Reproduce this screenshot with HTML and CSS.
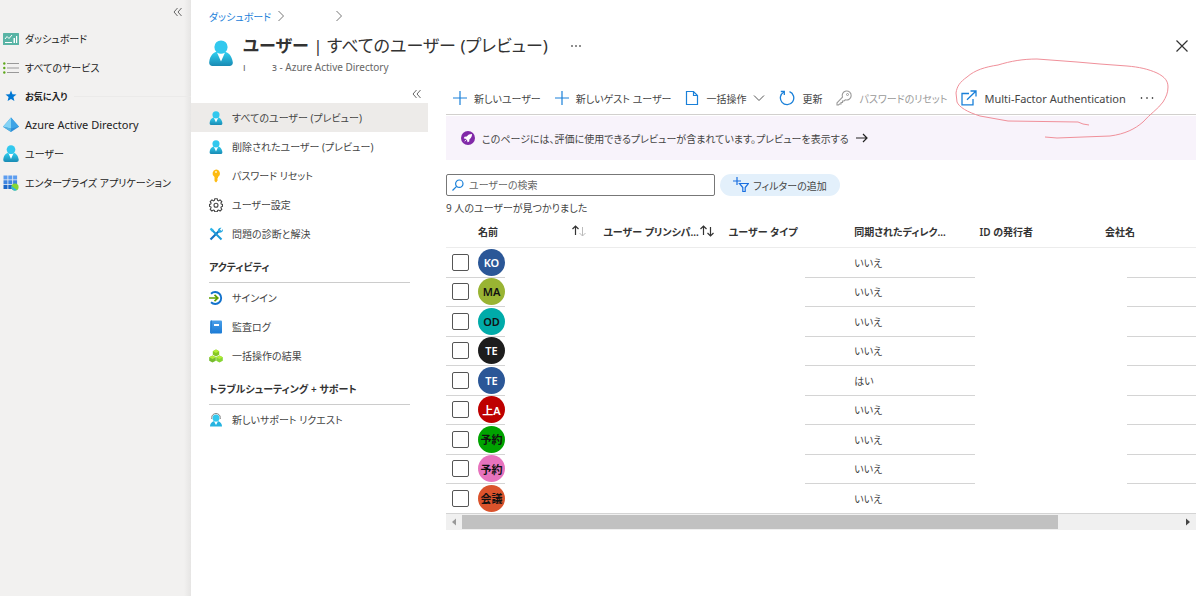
FILE: index.html
```html
<!DOCTYPE html>
<html lang="ja">
<head>
    <meta charset="UTF-8">
    <meta name="viewport" content="width=device-width, initial-scale=1.0">
    <title>ユーザー | すべてのユーザー (プレビュー)</title>
    <link rel="stylesheet" href="styles.css">
</head>
<body>
    <!-- Shared icons -->
    <svg class="defs" aria-hidden="true">
        <defs>
            <linearGradient id="personFill" x1="0" y1="0" x2="0" y2="1">
                <stop offset="0" stop-color="#32d4f5"/>
                <stop offset="1" stop-color="#198ab3"/>
            </linearGradient>
            <linearGradient id="bookFill" x1="0" y1="0" x2="0" y2="1">
                <stop offset="0" stop-color="#4a9fe8"/>
                <stop offset="1" stop-color="#1a7bd6"/>
            </linearGradient>
        </defs>
        <symbol id="person" viewBox="0 0 24 26">
            <path d="M20.500 26a3.300 3.300 0 0 0 3.300-3.700C23 16 19.500 11 12 11S1 15.400.200 22.300A3.300 3.300 0 0 0 3.500 26z" fill="url(#personFill)"/>
            <path d="M12 13.500c-1.500 0-2.800-.4-4-1.100L12 21.500l4-9.100c-1.200.7-2.500 1.100-4 1.100z" fill="#fff"/>
            <circle cx="12" cy="7" r="6.600" fill="#32c8ee"/>
        </symbol>
        <symbol id="chevron" viewBox="0 0 8 12">
            <path d="M1.500 1l5 5-5 5" fill="none" stroke="#777" stroke-width="1"/>
        </symbol>
        <symbol id="collapse" viewBox="0 0 10 10">
            <path d="M4.500 1L1 5l3.500 4M8.500 1L5 5l3.500 4" fill="none" stroke="#666" stroke-width="1"/>
        </symbol>
        <symbol id="plus" viewBox="0 0 14 14">
            <path d="M7 0v14M0 7h14" stroke="#1a80d9" stroke-width="1.200"/>
        </symbol>
        <symbol id="sort" viewBox="0 0 16 12">
            <path d="M4.500 10V1M1.500 4l3-3 3 3" fill="none" stroke="#333" stroke-width="1.200"/>
            <path d="M11.500 2v9M8.500 8l3 3 3-3" fill="none" stroke="#333" stroke-width="1.200"/>
        </symbol>
        <symbol id="sort-asc" viewBox="0 0 16 12">
            <path d="M4.500 10V1M1.500 4l3-3 3 3" fill="none" stroke="#333" stroke-width="1.200"/>
            <path d="M11.500 2v9M8.500 8l3 3 3-3" fill="none" stroke="#bbb" stroke-width="1"/>
        </symbol>
    </svg>

    <div class="portal">
        <nav class="sidebar">
            <button class="collapse-btn" aria-label="折りたたむ"><svg width="10" height="10"><use href="#collapse"/></svg></button>
            <a class="side-item" href="#">
                <svg width="16" height="16" viewBox="0 0 16 16"><rect y="2" width="16" height="12" rx=".5" fill="#59b4a5"/><path d="M2 8l2-2.500L6 7.500 9 4" fill="none" stroke="#fff" stroke-width="1"/><path d="M2 11h7v1H2zM10.500 7h1.500v5h-1.500zM13 5h1.200v7H13z" fill="#fff"/></svg>
                ダッシュボード
            </a>
            <a class="side-item" href="#">
                <svg width="16" height="16" viewBox="0 0 16 16"><path d="M4 3.500h12M4 8h12M4 12.500h12" stroke="#999" stroke-width="1.200"/><circle cx="1.300" cy="3.500" r="1.200" fill="#5ea81b"/><circle cx="1.300" cy="8" r="1.200" fill="#5ea81b"/><circle cx="1.300" cy="12.500" r="1.200" fill="#5ea81b"/></svg>
                すべてのサービス
            </a>
            <div class="side-heading">
                <svg width="16" height="16" viewBox="0 0 16 16"><path d="M8 2.500l1.500 3.800 4 .2-3.100 2.600 1 4L8 10.900l-3.400 2.200 1-4L2.500 6.500l4-.2z" fill="#0078d4"/></svg>
                <span>お気に入り</span>
            </div>
            <a class="side-item latin" href="#">
                <svg width="16" height="16" viewBox="0 0 16 16"><path d="M8 .500L0 9.800 8 15l8-5.200z" fill="#2f8fd8"/><path d="M8 .500L0 9.800l8 1.700z" fill="#83d3f5"/><path d="M8 .500v11l8-1.700z" fill="#3ea4e6"/><path d="M0 9.800L8 15v-3.500z" fill="#53b1e0"/></svg>
                Azure Active Directory
            </a>
            <a class="side-item" href="#">
                <svg width="16" height="17"><use href="#person"/></svg>
                ユーザー
            </a>
            <a class="side-item" href="#">
                <svg width="16" height="16" viewBox="0 0 16 16"><path d="M.500.500h4v4h-4zM5.300.500h4v4h-4zM10.100.500h4v4h-4z" fill="#5c9df0"/><path d="M.500 5.300h4v4h-4zM5.300 5.300h4v4h-4zM10.100 5.300h4v4h-4z" fill="#3d84e0"/><path d="M.500 10.100h4v4h-4zM5.300 10.100h4v4h-4z" fill="#1a66c8"/><circle cx="12" cy="12" r="3.600" fill="#86d633"/><path d="M8.500 11a3.600 3.600 0 0 0 5.500 4z" fill="#32b8dd"/></svg>
                エンタープライズ アプリケーション
            </a>
        </nav>

        <main class="blade">
            <header class="blade-header">
                <div class="breadcrumb">
                    <a href="#">ダッシュボード</a>
                    <svg width="8" height="12"><use href="#chevron"/></svg>
                    <span class="crumb-blank"></span>
                    <svg width="8" height="12"><use href="#chevron"/></svg>
                </div>
                <div class="title-row">
                    <svg class="title-icon" width="24" height="26"><use href="#person"/></svg>
                    <div class="title-text">
                        <h1><b>ユーザー</b> | すべてのユーザー (プレビュー)</h1>
                        <p class="subtitle"><span class="tenant">ı</span>ɜ - Azure Active Directory</p>
                    </div>
                    <button class="icon-btn" aria-label="その他">
                        <svg width="12" height="4" viewBox="0 0 12 4"><circle cx="2" cy="2" r=".8"/><circle cx="6" cy="2" r=".8"/><circle cx="10" cy="2" r=".8"/></svg>
                    </button>
                    <button class="icon-btn close" aria-label="閉じる">
                        <svg width="12" height="12" viewBox="0 0 12 12"><path d="M.500.500l11 11M11.500.500l-11 11" stroke="#333" stroke-width="1.200"/></svg>
                    </button>
                </div>
            </header>

            <div class="blade-body">
                <nav class="menu">
                    <button class="collapse-btn menu-collapse" aria-label="メニューを折りたたむ"><svg width="10" height="10"><use href="#collapse"/></svg></button>
                    <a class="menu-item active" href="#"><svg width="14" height="14"><use href="#person"/></svg>すべてのユーザー (プレビュー)</a>
                    <a class="menu-item" href="#"><svg width="14" height="14"><use href="#person"/></svg>削除されたユーザー (プレビュー)</a>
                    <a class="menu-item" href="#">
                        <svg width="14" height="14" viewBox="0 0 14 14"><path d="M7 .500a4 4 0 0 1 2 7.400V9L8 10l1 1-1 1v.600l-1 1-1.500-1.600V7.900A4 4 0 0 1 7 .500z" fill="#fdbb12"/><circle cx="7" cy="3" r="1" fill="#fff3c4"/></svg>
                        パスワード リセット
                    </a>
                    <a class="menu-item" href="#">
                        <svg width="14" height="14" viewBox="0 0 14 14"><path d="M5.800.700h2.400l.400 1.700 1 .400 1.500-.9 1.700 1.700-.9 1.500.4 1 1.200.300v2l-1.200.400-.4 1 .9 1.500-1.700 1.700-1.500-.9-1 .4-.4 1.300H5.800l-.4-1.300-1-.4-1.500.9-1.700-1.700.9-1.500-.4-1L.500 8.400v-2l1.200-.3.4-1-.9-1.500 1.700-1.700 1.500.9 1-.4z" fill="none" stroke="#444" stroke-width="1.100"/><circle cx="7" cy="7.300" r="2" fill="none" stroke="#444" stroke-width="1.100"/></svg>
                        ユーザー設定
                    </a>
                    <a class="menu-item" href="#">
                        <svg width="14" height="14" viewBox="0 0 14 14"><path d="M1.500 12.500L11 3" stroke="#1273c4" stroke-width="2.200"/><path d="M9 4.800a3 3 0 0 1 3.500-4L11 2.400l.6 1 1.100.3L13.800 2a3 3 0 0 1-4 3.600z" fill="#27a9e0"/><path d="M3.500 3.500l9 9" stroke="#1c9ad8" stroke-width="2"/><path d="M.800 2.200L2.200.800l2.300 1.700L4 4l-1.500.5z" fill="#2bb4e8"/></svg>
                        問題の診断と解決
                    </a>

                    <h2 class="menu-heading">アクティビティ</h2>
                    <a class="menu-item" href="#">
                        <svg width="14" height="14" viewBox="0 0 14 14"><path d="M2 2.700a6 6 0 1 1 0 8.600" fill="none" stroke="#1272cc" stroke-width="1.900"/><path d="M0 7h8.500M5.500 3.800L8.800 7l-3.300 3.200" fill="none" stroke="#5ea000" stroke-width="1.700"/></svg>
                        サインイン
                    </a>
                    <a class="menu-item" href="#">
                        <svg width="14" height="14" viewBox="0 0 14 14"><rect x="1" y=".5" width="12" height="13" rx="1" fill="url(#bookFill)"/><path d="M2.500.500v13" stroke="#2a80d0" stroke-width="1"/><rect x="5" y="4" width="5" height="2" fill="#fff"/></svg>
                        監査ログ
                    </a>
                    <a class="menu-item" href="#">
                        <svg width="14" height="14" viewBox="0 0 14 14"><path d="M7 .500l3.200 1.700v3.600L7 7.500 3.800 5.800V2.200z" fill="#86c724"/><path d="M3.500 6.500L6.800 8.200v3.600l-3.300 1.700L.200 11.800V8.200z" fill="#76bc2d"/><path d="M10.500 6.500l3.300 1.700v3.600l-3.300 1.700-3.300-1.700V8.200z" fill="#86d633"/><path d="M7 .500l3.200 1.700L7 3.900 3.800 2.200zM3.500 6.500l3.300 1.700-3.300 1.700L.200 8.200zM10.500 6.500l3.300 1.700-3.300 1.700-3.300-1.700z" fill="#b4ec36"/></svg>
                        一括操作の結果
                    </a>

                    <h2 class="menu-heading">トラブルシューティング + サポート</h2>
                    <a class="menu-item" href="#">
                        <svg width="14" height="14" viewBox="0 0 14 14"><path d="M1 13.500C1 10 3.500 8 7 8s6 2 6 5.500z" fill="#25b3e0"/><path d="M5 8.300L7 12l2-3.700z" fill="#fff"/><circle cx="7" cy="5" r="3.500" fill="#32c8ee"/><path d="M2.700 6V4.500a4.300 4 0 0 1 8.600 0V6" fill="none" stroke="#888" stroke-width="1"/></svg>
                        新しいサポート リクエスト
                    </a>
                </nav>

                <section class="content">
                    <div class="toolbar">
                        <button><svg width="14" height="14"><use href="#plus"/></svg>新しいユーザー</button>
                        <button><svg width="14" height="14"><use href="#plus"/></svg>新しいゲスト ユーザー</button>
                        <button>
                            <svg width="14" height="16" viewBox="0 0 14 16"><path d="M1.500 1.500h7l4 4v9h-11zM8.500 1.500v4h4" fill="none" stroke="#1a80d9" stroke-width="1.200"/></svg>
                            一括操作
                            <svg class="caret" width="12" height="8" viewBox="0 0 12 8"><path d="M1 1.500l5 5 5-5" fill="none" stroke="#555" stroke-width="1"/></svg>
                        </button>
                        <button>
                            <svg width="16" height="16" viewBox="0 0 16 16"><path d="M5 2a6.700 6.700 0 1 0 5.500-.3" fill="none" stroke="#1a80d9" stroke-width="1.300"/><path d="M1.800 1.500h3.500V5" fill="none" stroke="#1a80d9" stroke-width="1.300"/></svg>
                            更新
                        </button>
                        <button class="disabled" disabled>
                            <svg width="16" height="16" viewBox="0 0 16 16"><path d="M1 12.800l5.500-5.600a4.500 4.500 0 1 1 2.800 2.600L8 11H6.500v1.500H5V14H3.500l-1 1H1z" fill="none" stroke="#999" stroke-width="1.100"/><circle cx="11.500" cy="4.500" r="1" fill="none" stroke="#999"/></svg>
                            パスワードのリセット
                        </button>
                        <button class="latin">
                            <svg width="16" height="16" viewBox="0 0 16 16"><path d="M8 3.500H1v11.300h11V9M6 9.800L15 1M9.500 1H15v5.500" fill="none" stroke="#1a80d9" stroke-width="1.300"/></svg>
                            Multi-Factor Authentication
                        </button>
                        <button class="more" aria-label="その他のコマンド">
                            <svg width="14" height="4" viewBox="0 0 14 4"><circle cx="1.500" cy="2" r=".8"/><circle cx="7" cy="2" r=".8"/><circle cx="12.500" cy="2" r=".8"/></svg>
                        </button>
                    </div>

                    <a class="banner" href="#">
                        <svg width="14" height="14" viewBox="0 0 14 14"><circle cx="7" cy="7" r="7" fill="#8129a8"/><path d="M11 3c-2.500 0-4 .8-5.300 2.500L3.500 5.800 2.800 7.500l1.800.3 1.600 1.600.3 1.800 1.700-.7.300-2.200C10.200 7 11 5.500 11 3z" fill="#fff"/><path d="M4.500 8.800l-1.300 2 2-1.300z" fill="#fff"/></svg>
                        <span>このページには、評価に使用できるプレビューが含まれています。プレビューを表示する</span>
                        <svg width="12" height="10" viewBox="0 0 12 10"><path d="M0 5h11M7 1l4 4-4 4" fill="none" stroke="#222" stroke-width="1.200"/></svg>
                    </a>

                    <div class="filters">
                        <label class="search">
                            <svg width="12" height="12" viewBox="0 0 12 12"><circle cx="7.300" cy="4.700" r="3.700" fill="none" stroke="#1a80d9" stroke-width="1.200"/><path d="M4.600 7.400L.500 11.500" stroke="#1a80d9" stroke-width="1.200"/></svg>
                            <input type="text" placeholder="ユーザーの検索" aria-label="ユーザーの検索">
                        </label>
                        <button class="filter-btn">
                            <svg width="16" height="16" viewBox="0 0 16 16"><path d="M4 0v8M0 4h8" stroke="#1a6fe0" stroke-width="1.200"/><path d="M6.500 6.500h9l-3.300 4v4h-2.400v-4z" fill="none" stroke="#1a6fe0" stroke-width="1.200"/></svg>
                            フィルターの追加
                        </button>
                    </div>
                    <p class="count">9 人のユーザーが見つかりました</p>

                    <div class="grid">
                        <table>
                            <colgroup>
                                <col class="col-check"><col><col><col><col><col><col class="col-last">
                            </colgroup>
                            <thead>
                                <tr>
                                    <th></th>
                                    <th><div class="th-in">名前<svg class="sort" width="16" height="12"><use href="#sort-asc"/></svg></div></th>
                                    <th><div class="th-in"><span>ユーザー プリンシパ...</span><svg class="sort" width="16" height="12"><use href="#sort"/></svg></div></th>
                                    <th>ユーザー タイプ</th>
                                    <th>同期されたディレク...</th>
                                    <th>ID の発行者</th>
                                    <th>会社名</th>
                                </tr>
                            </thead>
                            <tbody>
                                <tr><td><input type="checkbox" aria-label="KO"></td><td><span class="avatar blue">KO</span></td><td></td><td></td><td>いいえ</td><td></td><td></td></tr>
                                <tr><td><input type="checkbox" aria-label="MA"></td><td><span class="avatar lime">MA</span></td><td></td><td></td><td>いいえ</td><td></td><td></td></tr>
                                <tr><td><input type="checkbox" aria-label="OD"></td><td><span class="avatar teal">OD</span></td><td></td><td></td><td>いいえ</td><td></td><td></td></tr>
                                <tr><td><input type="checkbox" aria-label="TE"></td><td><span class="avatar black">TE</span></td><td></td><td></td><td>いいえ</td><td></td><td></td></tr>
                                <tr><td><input type="checkbox" aria-label="TE"></td><td><span class="avatar blue">TE</span></td><td></td><td></td><td>はい</td><td></td><td></td></tr>
                                <tr><td><input type="checkbox" aria-label="上A"></td><td><span class="avatar red">上A</span></td><td></td><td></td><td>いいえ</td><td></td><td></td></tr>
                                <tr><td><input type="checkbox" aria-label="予約"></td><td><span class="avatar green">予約</span></td><td></td><td></td><td>いいえ</td><td></td><td></td></tr>
                                <tr><td><input type="checkbox" aria-label="予約"></td><td><span class="avatar pink">予約</span></td><td></td><td></td><td>いいえ</td><td></td><td></td></tr>
                                <tr><td><input type="checkbox" aria-label="会議"></td><td><span class="avatar orange">会議</span></td><td></td><td></td><td>いいえ</td><td></td><td></td></tr>
                            </tbody>
                        </table>
                        <!-- Blanked out personal data -->
                        <div class="mask mask-name"></div>
                        <div class="mask mask-issuer"></div>
                    </div>
                    <div class="scrollbar">
                        <svg width="16" height="16" viewBox="0 0 16 16"><path d="M10 4.500v7L6 8z" fill="#999"/></svg>
                        <div class="track"><div class="thumb"></div></div>
                        <svg width="16" height="16" viewBox="0 0 16 16"><path d="M6 4.500v7L10 8z" fill="#444"/></svg>
                    </div>
                </section>
            </div>
        </main>

        <!-- Hand-drawn circle -->
        <svg class="pen" width="216" height="84" viewBox="0 0 216 84">
            <path d="M134 67l-6-1-5-2-70-1-28-5C12 54 4 49 2 44L1 35C2 28 5 24 12 19 20 12 30 9 43 7 56 3 68 1 82 1l40 3 23 2 27 2c12 1 21 3 30 7 8 4 11 8 11 14 0 6-2 10-5 15-5 7-13 12-20 20-8 7-18 12-33 14l-27 1-26 1-12-1" fill="none" stroke="#f0909a" stroke-width="1"/>
        </svg>
    </div>
</body>
</html>
```

FILE: styles.css
```css
* {
    box-sizing: border-box;
}
body {
    margin: 0;
    font-family: "Noto Sans", "Noto Sans CJK JP", sans-serif;
    font-size: 10px;
    font-feature-settings: "palt";
    color: #444;
    background-color: #fff;
}
a {
    color: inherit;
    text-decoration: none;
}
button {
    font: inherit;
    font-feature-settings: inherit;
    color: inherit;
    background: none;
    border: none;
    padding: 0;
    cursor: pointer;
}
svg {
    display: block;
    flex-shrink: 0;
}
.defs {
    position: absolute;
    width: 0;
    height: 0;
}
.portal {
    display: flex;
    min-height: 100vh;
    position: relative;
}

/* Left sidebar */
.sidebar {
    width: 191px;
    flex-shrink: 0;
    background: linear-gradient(to right, #f2f1f0 184px, #e6e5e4);
    color: #222;
}
.collapse-btn {
    display: block;
    margin-left: auto;
    padding: 7px 8px;
}
.side-item, .side-heading {
    display: flex;
    align-items: center;
    gap: 6px;
    height: 29px;
    padding-left: 3px;
    white-space: nowrap;
}
.side-heading {
    height: 28px;
    font-size: 9px;
    font-weight: bold;
}
.side-heading::after {
    content: "";
    flex: 1;
    border-top: 1px solid #ebeae9;
}
.side-item.latin, .toolbar .latin {
    font-size: 11px;
}

/* Blade header */
.blade {
    flex: 1;
    min-width: 0;
}
.blade-header {
    height: 85px;
    padding: 6px 12px 0 18px;
}
.breadcrumb {
    display: flex;
    align-items: center;
    height: 20px;
    gap: 6px;
}
.breadcrumb a {
    color: #1a80d9;
}
.crumb-blank {
    width: 38px;
}
.title-row {
    display: flex;
    align-items: flex-start;
}
.title-icon {
    margin-top: 14px;
}
.title-text {
    margin-left: 10px;
}
h1 {
    margin: 5px 0 0;
    font-size: 17px;
    font-weight: normal;
    line-height: 29px;
    color: #333;
}
.subtitle {
    display: flex;
    margin: 0;
    font-size: 10px;
    line-height: 14px;
    color: #666;
}
.tenant {
    width: 29px;
}
.icon-btn {
    margin: 18px 0 0 22px;
}
.close {
    margin: 14px 0 0 auto;
}

/* Blade menu */
.blade-body {
    display: flex;
}
.menu {
    width: 237px;
    flex-shrink: 0;
}
.menu-collapse {
    height: 18px;
    padding: 4px 6px;
}
.menu-item {
    display: flex;
    align-items: center;
    gap: 9px;
    height: 29px;
    padding-left: 18px;
    white-space: nowrap;
}
.menu-item.active {
    background-color: #edebe9;
}
.menu-heading {
    height: 35px;
    margin: 0 18px;
    padding-top: 5px;
    border-bottom: 1px solid #ccc;
    font-size: 10px;
    line-height: 29px;
    font-weight: 600;
    color: #333;
    white-space: nowrap;
}

/* Content */
.content {
    flex: 1;
    min-width: 0;
    margin: 0 4px 0 18px;
}
.toolbar {
    display: flex;
    align-items: center;
    gap: 14px;
    height: 30px;
    padding: 0 7px 3px;
    border-bottom: 1px solid #d2d0ce;
    white-space: nowrap;
}
.toolbar button {
    display: flex;
    align-items: center;
    gap: 7px;
}
.toolbar .disabled {
    color: #999;
    cursor: default;
}
.banner {
    display: flex;
    align-items: center;
    gap: 7px;
    height: 44px;
    margin-top: 1px;
    padding-left: 15px;
    background-color: #f8f3fb;
}
.filters {
    display: flex;
    gap: 5px;
    margin-top: 14px;
}
.search {
    display: flex;
    align-items: center;
    gap: 5px;
    width: 269px;
    height: 22px;
    padding-left: 5px;
    border: 1px solid #777;
    border-radius: 2px;
}
.search input {
    flex: 1;
    min-width: 0;
    padding: 0;
    border: none;
    outline: none;
    font: inherit;
    font-feature-settings: inherit;
}
.search input::placeholder {
    color: #666;
}
.filter-btn {
    display: flex;
    align-items: center;
    justify-content: center;
    gap: 4px;
    width: 120px;
    border-radius: 11px;
    background-color: #e3f0fb;
}
.count {
    margin: 5px 0 0;
    line-height: 15px;
}

/* User table */
.grid {
    position: relative;
}
table {
    width: 100%;
    table-layout: fixed;
    border-collapse: collapse;
}
.col-check {
    width: 32px;
}
.col-last {
    width: 91px;
}
th, td {
    padding: 0;
    text-align: left;
    white-space: nowrap;
}
th {
    height: 31px;
    border-bottom: 1px solid #ececec;
    font-weight: 600;
    color: #333;
}
.th-in {
    display: flex;
    align-items: center;
    justify-content: space-between;
}
.th-in .sort {
    margin-right: 16px;
}
tbody tr {
    height: 30px;
}
tbody tr:nth-child(even) {
    height: 29px;
}
td {
    border-bottom: 1px solid #d4d4d4;
}
td input {
    appearance: none;
    display: block;
    width: 17px;
    height: 17px;
    margin: 0 0 0 6px;
    border: 1px solid #555;
    border-radius: 2px;
}
td input:checked {
    background-color: #0078d4;
}
.avatar {
    display: flex;
    align-items: center;
    justify-content: center;
    width: 27px;
    height: 27px;
    border-radius: 50%;
    font-size: 11px;
    font-weight: 600;
    color: #111;
}
.blue { background-color: #2b5797; color: #fff; }
.lime { background-color: #99b433; }
.teal { background-color: #00aba9; }
.black { background-color: #1d1d1d; color: #fff; }
.red { background-color: #be0000; color: #fff; }
.green { background-color: #00a300; }
.pink { background-color: #e773bd; }
.orange { background-color: #da532c; }

.mask {
    position: absolute;
    top: 32px;
    bottom: 1px;
    background-color: #fff;
}
.mask-name {
    left: 59px;
    width: 40%;
}
.mask-issuer {
    right: 69px;
    width: 152px;
}

.scrollbar {
    display: flex;
    height: 16px;
    background-color: #f0f0f0;
}
.track {
    flex: 1;
    padding: 1px 0;
}
.thumb {
    width: 83%;
    height: 14px;
    background-color: #c1c1c1;
}

.pen {
    position: absolute;
    top: 58px;
    right: 29px;
    pointer-events: none;
}
```
